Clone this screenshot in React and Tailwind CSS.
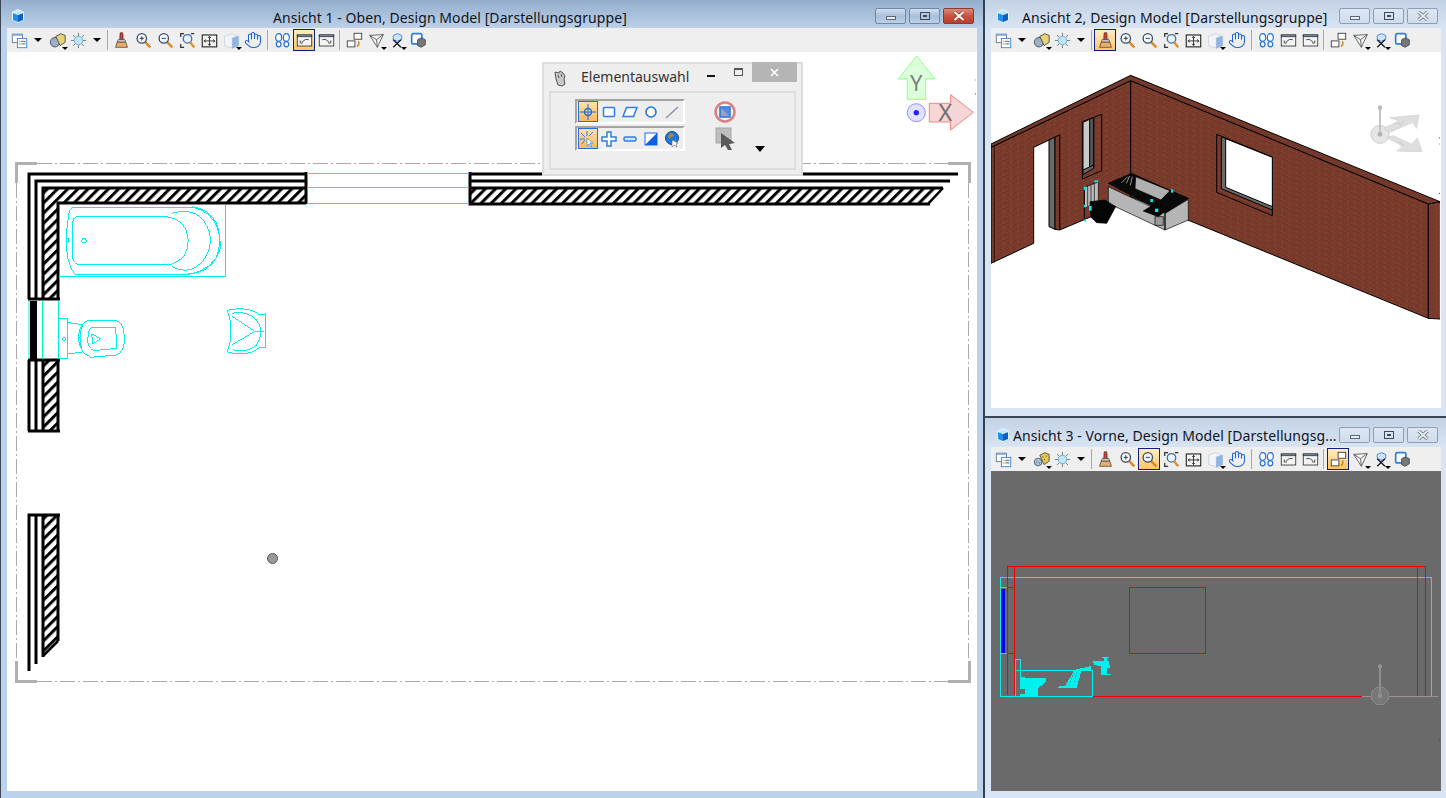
import { Hand } from "lucide-react";

const FONT = "font-['Noto_Sans','Open_Sans',sans-serif]";

const Tri = () => (
  <div className="w-0 h-0 border-x-[4px] border-x-transparent border-t-[4px] border-t-black" />
);

const icons = {
  list: (
    <>
      <rect x="1.500" y="2.500" width="12" height="10" fill="#fff" stroke="#5a6f98" />
      <rect x="1.500" y="2.500" width="12" height="2" fill="#7fa6dc" />
      <rect x="7.500" y="7.500" width="11" height="11" fill="#fff" stroke="#2f7fe0" />
      <path d="M12 11h5M12 14h5" stroke="#444" />
      <path d="M9 11h2" stroke="#e08a20" />
      <path d="M9 14h2" stroke="#40a040" />
    </>
  ),
  view: (
    <>
      <circle cx="7" cy="12" r="5.500" fill="#9db0c6" stroke="#34425a" />
      <path d="M8 5l6-3 5 2v8l-6 4z" fill="#e5d27a" stroke="#4a4530" />
    </>
  ),
  viewDots: (
    <>
      <circle cx="6" cy="13" r="4.500" fill="#a8bfd8" stroke="#4a5a70" />
      <path d="M8 5l6-3 5 2v8l-6 4z" fill="#e3c94f" stroke="#4a4530" />
      <path d="M11 7h1M15 6h1M13 10h1M4 13h1M7 14h1" stroke="#222" />
    </>
  ),
  sun: (
    <>
      <path d="M10 1v18M1 10h18M3.500 3.500l13 13M16.500 3.500l-13 13" stroke="#6a7078" />
      <circle cx="10" cy="10" r="5" fill="#bfe6f8" stroke="#6fa8c8" />
    </>
  ),
  brush: (
    <>
      <path d="M8.500 1h3l.5 8h-4z" fill="#c8453a" stroke="#7a2a22" />
      <path d="M6 9h8l1 3H5z" fill="#d8d8d8" stroke="#555" />
      <path d="M5 12h10l2 6H3z" fill="#e8b070" stroke="#6a4a2a" />
    </>
  ),
  zoomin: (
    <>
      <path d="M12 12l6 6" stroke="#e08a20" strokeWidth="3" />
      <circle cx="8" cy="7.500" r="5.500" fill="#eef6ff" stroke="#3b4a5c" strokeWidth="1.500" />
      <path d="M5.500 7.500h5M8 5v5" stroke="#223" />
    </>
  ),
  zoomout: (
    <>
      <path d="M12 12l6 6" stroke="#e08a20" strokeWidth="3" />
      <circle cx="8" cy="7.500" r="5.500" fill="#eef6ff" stroke="#3b4a5c" strokeWidth="1.500" />
      <path d="M5.500 7.500h5" stroke="#223" />
    </>
  ),
  fitarea: (
    <>
      <path d="M2 6V2h4M14 2h4M2 14v4h4" fill="none" stroke="#333" strokeWidth="1.500" />
      <circle cx="10" cy="8" r="5" fill="#eaf4ff" stroke="#3f6fa8" strokeWidth="1.500" />
      <path d="M13 12l5 6" stroke="#e08a20" strokeWidth="2.500" />
    </>
  ),
  fit: (
    <>
      <rect x="1.500" y="3.500" width="17" height="14" fill="#f2f2f2" stroke="#222" strokeWidth="1.300" />
      <path d="M10 5.500v10M4 10.500h12M8.500 7l1.500-2 1.500 2M8.500 14l1.500 2 1.500-2M5.500 9l-2 1.500 2 1.500M14.500 9l2 1.500-2 1.500" fill="none" stroke="#222" />
    </>
  ),
  cube: (
    <>
      <path d="M2 5l8-3 8 3v11l-7 3-9-3z" fill="#f2f4f8" stroke="#c8d0da" />
      <path d="M11 7l7-2v11l-7 3z" fill="#8fb4e8" stroke="#9ab8dc" />
    </>
  ),
  steps: (
    <>
      <ellipse cx="5.500" cy="6.500" rx="3.500" ry="4.500" fill="#fff" stroke="#1f6fd8" strokeWidth="1.400" />
      <ellipse cx="5.500" cy="14.500" rx="2.800" ry="3" fill="#fff" stroke="#1f6fd8" strokeWidth="1.400" />
      <ellipse cx="14.500" cy="6.500" rx="3.500" ry="4.500" fill="#fff" stroke="#1f6fd8" strokeWidth="1.400" />
      <ellipse cx="14.500" cy="14.500" rx="2.800" ry="3" fill="#fff" stroke="#1f6fd8" strokeWidth="1.400" />
    </>
  ),
  prev: (
    <>
      <rect x="1.500" y="3.500" width="17" height="13" fill="#f4f4f4" stroke="#333" />
      <rect x="1.500" y="3.500" width="17" height="2" fill="#8fb4e8" stroke="#333" />
      <path d="M15 9q-4-2-8 3M5 10v3h3" fill="none" stroke="#333" />
    </>
  ),
  next: (
    <>
      <rect x="1.500" y="3.500" width="17" height="13" fill="#f4f4f4" stroke="#333" />
      <rect x="1.500" y="3.500" width="17" height="2" fill="#8fb4e8" stroke="#333" />
      <path d="M5 9q4-2 8 3M15 10v3h-3" fill="none" stroke="#333" />
    </>
  ),
  copy: (
    <>
      <rect x="9.500" y="1.500" width="9" height="7" fill="#fff" stroke="#333" />
      <rect x="1.500" y="10.500" width="9" height="7" fill="#fff" stroke="#333" />
      <path d="M15 11v4l-2 2" fill="none" stroke="#c07a10" strokeWidth="1.500" />
    </>
  ),
  clip: (
    <>
      <path d="M2 4l16-1-7 15z" fill="#f4f4f4" stroke="#555" />
      <path d="M2 4l8 5 8-6M10 9l1 9" fill="none" stroke="#555" />
    </>
  ),
  xcut: (
    <>
      <path d="M5 4l5-2 5 2v5l-5 2-5-2z" fill="#cfe3fb" stroke="#2f7fe0" />
      <path d="M5 9l9 9M14 9l-9 9" stroke="#1a1a2a" strokeWidth="1.600" />
    </>
  ),
  cube2: (
    <>
      <rect x="2" y="2" width="12" height="12" rx="2" fill="#fff" stroke="#2f7fe0" strokeWidth="2" />
      <path d="M9 9l4-2 5 2v6l-5 3-4-2z" fill="#777" stroke="#444" />
    </>
  ),
};

const Ico = ({ name }) => (
  <svg width="17" height="17" viewBox="0 0 20 20">
    {icons[name]}
  </svg>
);

const Btn = ({ name, hot, drop, w = "w-[22px]" }) => (
  <div
    className={
      "relative h-[22px] flex items-center justify-center " +
      w +
      (hot ? " border border-[#0a1f80] bg-gradient-to-b from-[#fdeec4] to-[#fbc565]" : "")
    }
  >
    {name === "hand" ? <Hand size={18} strokeWidth={1.4} color="#1c63cf" /> : <Ico name={name} />}
    {drop && (
      <div className="absolute right-0 bottom-[1px] w-0 h-0 border-x-[3px] border-x-transparent border-t-[3px] border-t-black" />
    )}
  </div>
);

const Sep = ({ cls }) => <div className={"w-px h-[20px] bg-[#a8a8a8] " + cls} />;

const Drop = ({ w }) => (
  <div className={"h-[22px] flex items-center justify-center " + w}>
    <Tri />
  </div>
);

const Toolbar = ({ hot = [], view = "view" }) => (
  <div className="h-[24px] bg-[#efefef] flex items-center pl-px">
    <Btn name="list" />
    <Drop w="w-[16px]" />
    <Btn name={view} drop />
    <Btn name="sun" w="w-[20px]" />
    <Drop w="w-[18px]" />
    <Sep cls="ml-px mr-[2px]" />
    <Btn name="brush" hot={hot.includes("brush")} />
    <Btn name="zoomin" />
    <Btn name="zoomout" hot={hot.includes("zoomout")} />
    <Btn name="fitarea" />
    <Btn name="fit" />
    <Btn name="cube" drop />
    <Btn name="hand" />
    <Sep cls="ml-[3px] mr-[3px]" />
    <Btn name="steps" />
    <Btn name="prev" hot={hot.includes("prev")} />
    <Btn name="next" />
    <Sep cls="ml-[2px] mr-[3px]" />
    <Btn name="copy" hot={hot.includes("copy")} />
    <Btn name="clip" drop />
    <Btn name="xcut" drop w="w-[20px]" />
    <Btn name="cube2" />
  </div>
);

const AppIcon = () => (
  <svg width="16" height="16" viewBox="0 0 16 16">
    <path d="M2 4l6-3 6 3v8l-6 3-6-3z" fill="#dff1ff" />
    <path d="M3 5l5 2v7l-5-2z" fill="#1e90e8" />
    <path d="M8 7l5-2v7l-5 2z" fill="#0d5fc0" />
    <path d="M3 5l5-2.500 5 2.500-5 2z" fill="#bfe4fb" />
  </svg>
);

const Ctrl = ({ kind, active }) => {
  const red = kind === "close" && active;
  return (
    <div
      className={
        "w-[31px] h-[16px] rounded-[2px] border flex items-center justify-center " +
        (red
          ? "border-[#8a3a30] bg-gradient-to-b from-[#dc8b7c] via-[#c9503e] to-[#b8402f]"
          : active
            ? "border-[#6f87a8] bg-gradient-to-b from-[#d3e0ef] via-[#a9c0db] to-[#bcd0e6]"
            : "border-[#8d9db3] bg-gradient-to-b from-[#dde7f3] to-[#cfdcec]")
      }
    >
      {kind === "min" && <div className="w-[10px] h-[4px] mt-[3px] bg-[#e8edf3] border border-[#5c6878]" />}
      {kind === "max" && (
        <div className="w-[10px] h-[8px] border border-[#3e4a5a] flex items-center justify-center">
          <div className="w-[4px] h-[2px] bg-[#3e4a5a]" />
        </div>
      )}
      {kind === "close" && (
        <svg width="12" height="10" viewBox="0 0 12 10">
          <path d="M1.500 1l9 8M10.500 1l-9 8" stroke={red ? "#8a3a30" : "#5c6878"} strokeWidth="3.400" />
          <path d="M1.500 1l9 8M10.500 1l-9 8" stroke={red ? "#fff" : "#e8edf3"} strokeWidth="2" />
        </svg>
      )}
    </div>
  );
};

const Window = ({ title, active, titleCls, titleRow, ctrlCls, frame, canvas, hot, view, children, bottom }) => (
  <div className={"flex flex-col " + frame}>
    <div
      className={
        "flex items-start shrink-0 " +
        titleRow +
        (active
          ? " bg-gradient-to-b from-[#93aecd] to-[#bdd1e8]"
          : " bg-gradient-to-b from-[#c3d2e5] to-[#d8e4f3]")
      }
    >
      <AppIcon />
      <span className={"text-[14px] leading-[20px] text-[#10141c] whitespace-nowrap tracking-[0.07px] " + titleCls}>
        {title}
      </span>
      <div className={"ml-auto flex gap-[3px] " + ctrlCls}>
        <Ctrl kind="min" active={active} />
        <Ctrl kind="max" active={active} />
        <Ctrl kind="close" active={active} />
      </div>
    </div>
    <div className={"flex flex-col " + canvas}>
      <Toolbar hot={hot} view={view} />
      {children}
    </div>
    <div className={bottom} />
  </div>
);

const PlanDrawing = () => (
  <svg viewBox="7 52 969 739" className="block w-[969px] h-[739px]">
    <defs>
      <pattern id="hatch" width="7.200" height="7.200" patternUnits="userSpaceOnUse" patternTransform="rotate(45)">
        <rect width="3" height="7.200" fill="#000" />
      </pattern>
    </defs>

    {/* crop frame */}
    <g fill="none" stroke="#aaa">
      <path d="M37 163.500H948M37 681.500H948M16.500 183V661M968.500 183V661" strokeDasharray="15 3 2 3" />
    </g>
    <g fill="none" stroke="#b0b0b0" strokeWidth="3">
      <path d="M16.500 183V163.500H37M948 163.500H969.500V183M16.500 661V681.500H37M948 681.500H969.500V661" />
    </g>

    {/* hatched walls */}
    <path d="M43 188H306V203H58V299H43Z" fill="url(#hatch)" />
    <path d="M470 188H943L929 203H470Z" fill="url(#hatch)" />
    <path d="M43 360H58V431H43Z" fill="url(#hatch)" />
    <path d="M43 515H58V640L43 655Z" fill="url(#hatch)" />

    <g fill="none" stroke="#000" strokeWidth="3">
      <path d="M29 299V174H306M36 299V181H306M43 299V188H306M58 299V203H306M306 172V204M28 299H60" />
      <path d="M958 174H470M950 181H470M943 188H470L470 172V204H930" />
      <path d="M943 188L929 203" strokeWidth="2.500" />
      <path d="M28 360H60M29 360V431M36 360V431M43 360V431M58 360V431M28 431H60" />
      <path d="M27.500 515H60M29 515V671M36 515V664M43 515V657M58 515V641" />
      <path d="M43 656L58 641" strokeWidth="2.500" />
    </g>

    {/* window openings */}
    <path d="M307 173.500H469" stroke="#00f0f0" />
    <path d="M307 187.500H469" stroke="#00ffb0" />
    <path d="M307 203.500H469" stroke="#00f0d0" />
    <rect x="30" y="301" width="7" height="58" fill="#000" />
    <path d="M29 301V359" stroke="#00f0f0" />
    <path d="M42.500 301V359" stroke="#00ffb0" />
    <path d="M58.500 301V359" stroke="#00f0d0" />

    {/* fixtures */}
    <g transform="translate(0 150) scale(.3333)" fill="none" stroke="#00eeee" strokeWidth="3" shapeRendering="crispEdges">
      <path d="M178 381H676V165" />
      <path d="M570 172H225Q210 172 207 190Q196 250 200 300Q205 350 225 373H565" />
      <path d="M495 199H235Q218 199 217 225V320Q220 343 240 344H510Q565 330 565 270Q560 205 495 199" />
      <path d="M515 190Q570 175 600 200Q630 230 632 270Q630 320 590 350Q560 372 515 350" />
      <path d="M560 172Q610 170 640 210Q665 250 660 300Q640 360 560 375" />
      <path d="M575 170Q625 175 650 220Q668 270 650 320Q625 370 565 372" />
      <circle cx="252" cy="272" r="7" />
      <rect x="200" y="267" width="6" height="8" />
      <path d="M176 507H204V626H176M205 518L248 524M205 612L248 606M248 524Q232 560 248 606" />
      <path d="M262 512H350Q372 520 373 560Q375 605 350 615L270 622Q240 610 235 565Q238 520 262 512" />
      <path d="M275 532H345Q352 560 350 595L280 602Q262 590 263 565Q265 540 275 532" />
      <path d="M275 552L302 566L278 582Z" />
      <circle cx="192" cy="567" r="4" />
      <path d="M682 482Q690 478 720 476Q765 478 776 495L797 492V594L776 594Q755 612 720 612Q690 610 682 605L692 570V515Z" />
      <path d="M695 490Q740 480 770 510Q795 545 770 585Q740 610 700 600" />
      <path d="M695 498L765 544L695 585" />
      <path d="M765 544H792" />
    </g>

    {/* snap point */}
    <circle cx="272.500" cy="558.500" r="5" fill="#9a9a9a" stroke="#555" />

    {/* view axes */}
    <g transform="translate(530 0) scale(.3333)">
      <path d="M1160 168L1215 237H1187V298H1132V237H1105Z" fill="#dcffdc" stroke="#90ff90" strokeWidth="3" />
      <path d="M1198 310H1262V284L1330 337L1262 390V366H1198Z" fill="#f5d5d5" stroke="#f08585" strokeWidth="3" />
      <circle cx="1159" cy="338" r="27" fill="#e2e2ff" stroke="#9090ff" strokeWidth="3" />
      <circle cx="1159" cy="338" r="8" fill="#2222ee" />
      <text x="1159" y="272" textAnchor="middle" fontSize="66" fontFamily="Noto Sans" fill="#808080">Y</text>
      <text x="1246" y="362" textAnchor="middle" fontSize="70" fontFamily="Noto Sans" fill="#707070">X</text>
    </g>
    <path d="M975 80h1" stroke="#00eeee" />
    <path d="M975 94h1" stroke="#ee0000" />
  </svg>
);

const Cell = ({ hot, children }) => (
  <div
    className={
      "h-[21px] flex items-center justify-center " +
      (hot ? "w-[20px] border border-[#2a6fd0] bg-gradient-to-b from-[#fde2a8] to-[#fbb858]" : "w-[21px]")
    }
  >
    <svg width="18" height="18" viewBox="0 0 18 18">
      {children}
    </svg>
  </div>
);

const Palette = () => (
  <div className="absolute left-[535px] top-[10px] w-[261px] h-[114px] bg-[#eeeeee] border-2 border-[#dddddd] flex flex-col">
    <div className="h-[27px] flex items-start shrink-0">
      <svg width="14" height="17" viewBox="0 0 14 17" className="ml-[9px] mt-[6px]">
        <path d="M2 2l4 1 1-2 3 2 2 3-1 3 1 5-3 2-4-1-2-6z" fill="#c8c8c8" stroke="#555" />
        <path d="M5 5l1 3M8 4l1 3" stroke="#555" />
      </svg>
      <span className="ml-[14px] mt-[3px] text-[14px] leading-[20px] text-[#333]">Elementauswahl</span>
      <div className="ml-[18px] mt-[11px] w-[8px] h-[2px] bg-[#111]" />
      <div className="ml-[19px] mt-[4px] w-[9px] h-[8px] border border-[#555] border-t-2" />
      <div className="ml-[9px] -mt-[2px] w-[45px] h-[20px] bg-[#b5b5b5] flex items-center justify-center">
        <svg width="9" height="9" viewBox="0 0 9 9">
          <path d="M1 1l7 7M8 1l-7 7" stroke="#fff" strokeWidth="1.500" />
        </svg>
      </div>
    </div>
    <div className="ml-[5px] w-[247px] h-[79px] border-2 border-[#dedede] flex pl-[24px] pt-[6px]">
      <div className="flex flex-col gap-[2px]">
        <div className="w-[110px] h-[25px] border-2 border-t-[#a4a4a4] border-l-[#a4a4a4] border-r-white border-b-white flex items-center pl-px">
          <Cell hot>
            <circle cx="9" cy="9" r="3.500" fill="none" stroke="#1f6fd8" strokeWidth="1.500" />
            <path d="M9 1v16M1 9h16" stroke="#1f6fd8" />
          </Cell>
          <Cell>
            <rect x="3.500" y="4.500" width="11" height="9" rx="1" fill="#fff" stroke="#2f7fe0" strokeWidth="1.500" />
          </Cell>
          <Cell>
            <path d="M5.500 4.500H16L12.500 13.500H2Z" fill="#fff" stroke="#2f7fe0" strokeWidth="1.500" />
          </Cell>
          <Cell>
            <circle cx="9" cy="9" r="5" fill="#fff" stroke="#1f6fd8" strokeWidth="1.500" />
          </Cell>
          <Cell>
            <path d="M3 15L15 4" stroke="#8a92b0" strokeWidth="1.500" />
          </Cell>
        </div>
        <div className="w-[110px] h-[25px] border-2 border-t-[#a4a4a4] border-l-[#a4a4a4] border-r-white border-b-white flex items-center pl-px">
          <Cell hot>
            <path d="M8 1v5M2 3l4 4M1 9h5M14 2l-4 4M3 14l3-4" stroke="#2f7fe0" />
            <path d="M8 8v8l2-2 2 3 1-1-2-3h3z" fill="#fff" stroke="#2f7fe0" strokeWidth=".7" />
          </Cell>
          <Cell>
            <path d="M7 2h4v5h5v4h-5v5H7v-5H2V7h5z" fill="#fff" stroke="#2f7fe0" strokeWidth="1.500" />
          </Cell>
          <Cell>
            <rect x="3" y="7" width="12" height="4" rx="1.500" fill="#cfe3fb" stroke="#2f7fe0" strokeWidth="1.500" />
          </Cell>
          <Cell>
            <rect x="3" y="3" width="12" height="12" fill="#fff" stroke="#1f6fd8" />
            <path d="M15 3V15H3Z" fill="#0c5fe0" />
          </Cell>
          <Cell>
            <circle cx="9" cy="8" r="6.500" fill="#1f77d8" stroke="#124a90" />
            <path d="M7 3l3 1 1 2-3 1-1 2-2-2zM12 9l1 1-1 2z" fill="#a88a3a" />
            <path d="M9 10v7l2-2 3 2-1-3 2-1z" fill="#fff" stroke="#666" strokeWidth=".6" />
          </Cell>
        </div>
      </div>
      <div className="ml-[29px] flex flex-col items-center">
        <svg width="22" height="22" viewBox="0 0 22 22" className="mt-[2px]">
          <circle cx="11" cy="11" r="9.500" fill="#f5f5f5" stroke="#dc8080" strokeWidth="2.500" />
          <rect x="6" y="6" width="10" height="10" fill="#9aa0c4" stroke="#1f77e0" strokeWidth="1.500" />
          <path d="M7 7l8 8V7z" fill="#5a8ae0" />
        </svg>
        <svg width="22" height="24" viewBox="0 0 22 24" className="mt-[4px]">
          <rect x="2" y="1" width="15" height="15" fill="#bdbdbd" stroke="#a8a8a8" />
          <path d="M7 6L21 16L15 17L18 23L14 23L11 18L7 21Z" fill="#5a5a5a" />
        </svg>
      </div>
      <div className="ml-[19px] mt-[47px]">
        <div className="w-0 h-0 border-x-[5px] border-x-transparent border-t-[6px] border-t-black" />
      </div>
    </div>
  </div>
);

const Iso = () => (
  <svg viewBox="18 156 1347 1068" className="block w-[449px] h-[356px]">
    <defs>
      <pattern id="brickL" width="44" height="16" patternUnits="userSpaceOnUse" patternTransform="skewY(-25.500)">
        <rect width="44" height="16" fill="#743526" />
        <path d="M0 0.500H44M0 8.500H44M11 0V8M33 8V16" stroke="#8f5542" strokeWidth="1.400" />
      </pattern>
      <pattern id="brickR" width="44" height="16" patternUnits="userSpaceOnUse" patternTransform="skewY(22.400)">
        <rect width="44" height="16" fill="#743526" />
        <path d="M0 0.500H44M0 8.500H44M11 0V8M33 8V16" stroke="#8f5542" strokeWidth="1.400" />
      </pattern>
    </defs>
    <g stroke="#000" strokeWidth="3" strokeLinejoin="miter">
      <path d="M18 442L437 242V600L224 690V405L146 442V730L18 790Z" fill="url(#brickL)" />
      <path d="M437 242L1330 612V955L437 590Z" fill="url(#brickR)" />
      <path d="M1330 612L1365 605V957L1330 955Z" fill="url(#brickL)" />
      <path d="M18 432L437 226L1365 605L1330 612L437 242L18 442Z" fill="#74392a" />
      <path d="M192 420L210 411V688L192 680Z" fill="#686868" />
      <path d="M210 411L224 405V690L210 688Z" fill="url(#brickL)" />
      <path d="M28 437V788" fill="none" strokeWidth="2" />

      <path d="M292 365L350 343V512L292 537Z" fill="url(#brickL)" />
      <path d="M294 367L326 352V503L294 522Z" fill="#c9c9c9" />
      <path d="M314 358L326 352V503L314 510Z" fill="#555" />
      <path d="M294 510L326 495V505L294 524Z" fill="#666" />

      <path d="M695 403L862 471V647L695 577Z" fill="url(#brickR)" />
      <path d="M709 410L862 472V630L709 566Z" fill="#6a6a6a" />
      <path d="M722 416L862 472V620L722 562Z" fill="#fff" />
    </g>
    <path d="M1364 610V955" stroke="#ff00ff" strokeWidth="3" />

    {/* bath */}
    <g stroke="#000" strokeWidth="2">
      <path d="M370 560L540 640L610 598V660L540 690L370 610Z" fill="#b5b5b5" />
      <path d="M370 550L440 520L610 595L540 640Z" fill="#0a0a0a" />
      <path d="M452 530L555 572L528 600L450 566Z" fill="#b0b0b0" />
      <path d="M410 548l18-18M424 550l10-22M436 556l6-26" stroke="#ddd" fill="none" />
      <path d="M540 640V690" fill="none" strokeWidth="4" />
      <path d="M475 633L515 608L550 625L520 650Z" fill="#050505" />
      <path d="M510 650H535V676H510Z" fill="#9a9a9a" />
      <path d="M298 562L340 546V605L298 625Z" fill="#bdbdbd" />
      <path d="M308 558V618M318 554V614M328 550V610" fill="none" />
      <path d="M298 562V660" fill="none" strokeWidth="3" />
      <path d="M315 605L360 600L392 620L365 670L335 668L318 652Z" fill="#050505" />
    </g>
    <g fill="#00e8f0">
      <rect x="296" y="560" width="8" height="10" />
      <rect x="328" y="541" width="12" height="6" />
      <rect x="312" y="618" width="8" height="14" />
      <rect x="296" y="614" width="6" height="8" />
      <rect x="297" y="658" width="6" height="6" />
      <rect x="496" y="597" width="8" height="9" />
      <rect x="558" y="568" width="7" height="10" />
      <rect x="510" y="626" width="10" height="10" />
    </g>
    <path d="M1362 414h3" stroke="#e00" strokeWidth="3" />
    <path d="M1362 432h3" stroke="#0dd" strokeWidth="3" />
    <path d="M1362 580h3" stroke="#e00" strokeWidth="3" />

    {/* view cube */}
    <g transform="translate(1065 285)">
      <circle cx="120" cy="118" r="27" fill="#e6e6e6" stroke="#cfcfcf" strokeWidth="3" />
      <path d="M120 40V118" stroke="#c4c4c4" strokeWidth="6" />
      <circle cx="120" cy="38" r="7" fill="#bbb" />
      <circle cx="120" cy="118" r="7" fill="#b0b0b0" />
      <path d="M130 100L178 78L150 68L237 60L230 100L218 82L150 112Z" fill="#dedede" stroke="#cdcdcd" strokeWidth="2" />
      <path d="M140 128L160 122L215 148L232 128L246 170L170 168L192 155Z" fill="#dedede" stroke="#cdcdcd" strokeWidth="2" />
      <path d="M170 82l12 8 10-12M176 140l12 8-8 10" fill="none" stroke="#c4c4c4" strokeWidth="3" />
    </g>
  </svg>
);

const Front = () => (
  <svg viewBox="991 471 450 320" className="block w-[450px] h-[320px]" shapeRendering="crispEdges">
    <g transform="translate(985 560) scale(.3333)" fill="none" strokeWidth="3">
      <rect x="46" y="53" width="1294" height="357" stroke="#00f0f0" />
      <path d="M46 82H67M46 280H67" stroke="#00f0f0" />
      <rect x="47" y="86" width="13" height="192" fill="#0000f0" stroke="none" />
      <rect x="67" y="20" width="1255" height="390" stroke="#f00000" />
      <path d="M88 20V410M1298 20V410M67 84H88" stroke="#f00000" />
      <path d="M67 280H88" stroke="#f00000" />
      <rect x="433" y="82" width="229" height="198" stroke="#f00000" />
      <path d="M322 410H1130" stroke="#f00000" />
      <path d="M1130 409H1358" stroke="#a09090" />
      <rect x="67" y="404" width="25" height="8" fill="#6a6a6a" stroke="none" />
      <path d="M67 410H92" stroke="#00f0f0" />
      <g stroke="#00f0f0">
        <rect x="92" y="332" width="230" height="77" />
        <rect x="92" y="298" width="14" height="111" />
      </g>
      <g fill="#00f0f0">
        <path d="M105 352L183 355V365L160 385V409H105Z" />
        <path d="M218 380L240 378L268 330L318 318V330H290L275 385H218Z" />
        <path d="M322 303H372L377 345H348V318L330 316Z" />
        <path d="M352 291H372V295H365V303H358V295H352Z" />
      </g>
      <rect x="105" y="388" width="14" height="14" fill="#6a6a6a" />
      <rect x="365" y="325" width="9" height="17" fill="#6a6a6a" />
      <path d="M255 340l-12 36M266 340l-12 36M276 340l-12 36" stroke="#6a6a6a" strokeWidth="2" strokeDasharray="2 3" />
      <circle cx="1185" cy="408" r="27" stroke="#8a8a8a" fill="#787878" />
      <path d="M1185 322V408" stroke="#8f8f8f" strokeWidth="6" />
      <circle cx="1185" cy="320" r="7" fill="#8f8f8f" />
      <circle cx="1185" cy="408" r="7" fill="#8f8f8f" />
      <path d="M1362 538h3" stroke="#e00" />
    </g>
  </svg>
);

const App = () => (
  <div className={"w-[1446px] h-[798px] flex overflow-hidden bg-[#d9e5f4] " + FONT}>
    <div className="w-[985px] h-[798px] shrink-0 border-r-2 border-r-[#33404f] border-l border-l-[#3a4656]">
      <Window
        active
        title="Ansicht 1 - Oben, Design Model [Darstellungsgruppe]"
        titleRow="h-[28px] pt-[8px] pl-[9px]"
        titleCls="ml-[247px]"
        ctrlCls="mr-[9px]"
        frame="h-[798px] bg-[#bcd2ec]"
        canvas="pl-[6px] pr-[6px]"
        hot={["prev"]}
        bottom="h-[7px]"
      >
        <div className="relative h-[739px] bg-white">
          <PlanDrawing />
          <Palette />
        </div>
      </Window>
    </div>
    <div className="w-[461px] flex flex-col">
      <Window
        title="Ansicht 2, Design Model [Darstellungsgruppe]"
        titleRow="h-[28px] pt-[8px] pl-[10px]"
        titleCls="ml-[11px]"
        ctrlCls="mr-[8px]"
        frame="h-[416px] bg-[#d9e5f4]"
        canvas="pl-[6px] pr-[5px]"
        hot={["brush"]}
        bottom="h-[8px]"
      >
        <div className="h-[356px] bg-white">
          <Iso />
        </div>
      </Window>
      <Window
        title="Ansicht 3 - Vorne, Design Model [Darstellungsg..."
        titleRow="h-[31px] pt-[9px] pl-[10px] border-t-2 border-t-[#3a4656]"
        titleCls="ml-[2px] -mt-px"
        ctrlCls="mr-[8px]"
        frame="h-[382px] bg-[#d9e5f4]"
        canvas="pl-[6px] pr-[5px]"
        hot={["zoomout", "copy"]}
        view="viewDots"
        bottom="h-[7px]"
      >
        <div className="h-[320px] bg-[#6a6a6a]">
          <Front />
        </div>
      </Window>
    </div>
  </div>
);

export default App;
